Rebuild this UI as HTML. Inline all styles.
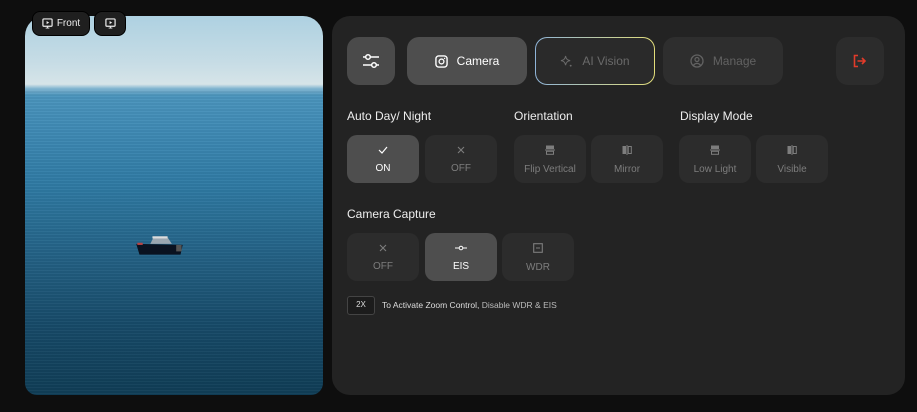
<!DOCTYPE html>
<html><head><meta charset="utf-8"><style>
*{margin:0;padding:0;box-sizing:border-box}
body{width:917px;height:412px;background:#0e0e0e;font-family:"Liberation Sans",sans-serif;position:relative;overflow:hidden;color:#fff}
.photo{position:absolute;left:25px;top:16px;width:298px;height:379px;border-radius:20px 20px 12px 12px;overflow:hidden;
background:linear-gradient(180deg,#aed1e1 0%,#c6dce5 12%,#d6e4e8 18%,#7fb3cf 19.2%,#4b95bd 21%,#3f8ab5 30%,#2f7aa3 45%,#225f82 65%,#174a68 82%,#103d56 100%)}
.ripple{position:absolute;left:0;right:0;top:74px;bottom:0;background:repeating-linear-gradient(180deg,rgba(255,255,255,.03) 0 1px,rgba(0,0,0,.04) 1px 3px)}
.badge{position:absolute;top:11px;height:25px;background:#1f1f1f;border:1.5px solid #000;border-radius:8px;color:#eee;font-size:10px;display:flex;align-items:center;justify-content:center;gap:4px}
.panel{position:absolute;left:332px;top:16px;width:573px;height:379px;background:#232323;border-radius:18px}
.b{position:absolute;border-radius:12px;display:flex;align-items:center;justify-content:center;font-size:12px;gap:9px}
.t{position:absolute;width:72px;height:48px;border-radius:10px;background:#2c2c2c;color:#7d7d7d;font-size:10px;display:flex;flex-direction:column;align-items:center;justify-content:center;gap:9px;padding-top:2px}
.t.on{background:#4e4e4e;color:#fff}
.lbl{position:absolute;font-size:12px;color:#eee}
</style></head><body>
<div class="photo"><div class="ripple"></div>
<svg style="position:absolute;left:108px;top:217px" width="54" height="26" viewBox="0 0 50 24">
<path d="M3 10 L46 11 L44 20 L6 20 Z" fill="#0a1220"/>
<path d="M16 10 L19 4 L32 4 L36 10 Z" fill="#9aa6b0"/>
<rect x="18" y="3" width="14" height="2" fill="#ddd"/>
<rect x="4" y="9" width="5" height="2" fill="#b44"/>
<rect x="40" y="11" width="5" height="6" fill="#555"/>
</svg></div>
<div class="badge" style="left:32px;width:58px"><svg width="11" height="11" viewBox="0 0 12 12"><rect x="1" y="1" width="10" height="8" rx="1" fill="none" stroke="#eee" stroke-width="1.3"/><path d="M5 3.3v3.4L7.8 5z" fill="#eee"/><path d="M6 9v2M4 11h4" stroke="#eee"/></svg>Front</div>
<div class="badge" style="left:94px;width:32px"><svg width="11" height="11" viewBox="0 0 12 12"><rect x="1" y="1" width="10" height="8" rx="1" fill="none" stroke="#eee" stroke-width="1.3"/><path d="M5 3.3v3.4L7.8 5z" fill="#eee"/><path d="M6 9v2M4 11h4" stroke="#eee"/></svg></div>
<div class="panel"></div>
<div class="b" style="left:347px;top:37px;width:48px;height:48px;background:#4a4a4a"><svg width="18" height="16" viewBox="0 0 18 16"><path d="M1 4h16M1 12h16" stroke="#fff" stroke-width="1.6"/><circle cx="6" cy="4" r="2.3" fill="#4a4a4a" stroke="#fff" stroke-width="1.5"/><circle cx="12" cy="12" r="2.3" fill="#4a4a4a" stroke="#fff" stroke-width="1.5"/></svg></div>
<div class="b" style="left:407px;top:37px;width:120px;height:48px;background:#4e4e4e;color:#fff"><svg width="13" height="13" viewBox="0 0 14 14"><rect x="1" y="1" width="12" height="12" rx="3" fill="none" stroke="#fff" stroke-width="1.5"/><circle cx="7" cy="7" r="2.6" fill="none" stroke="#fff" stroke-width="1.4"/><circle cx="10.3" cy="3.7" r=".8" fill="#fff"/></svg>Camera</div>
<div class="b" style="left:535px;top:37px;width:120px;height:48px;border:1.5px solid transparent;background:linear-gradient(#2a2a2a,#2a2a2a) padding-box,linear-gradient(90deg,#8fb4d8,#e2dd7a) border-box;color:#6a6a6a"><svg width="13" height="13" viewBox="0 0 14 14"><path d="M6 1 Q6.5 5.5 11 6 Q6.5 6.5 6 11 Q5.5 6.5 1 6 Q5.5 5.5 6 1z" fill="none" stroke="#6a6a6a" stroke-width="1.1"/><circle cx="11.5" cy="11.5" r="1" fill="#6a6a6a"/></svg>AI Vision</div>
<div class="b" style="left:663px;top:37px;width:120px;height:48px;background:#2e2e2e;color:#626262"><svg width="14" height="14" viewBox="0 0 14 14"><circle cx="7" cy="7" r="6" fill="none" stroke="#626262" stroke-width="1.3"/><circle cx="7" cy="5.5" r="2" fill="none" stroke="#626262" stroke-width="1.2"/><path d="M3.3 11.3Q7 7.5 10.7 11.3" fill="none" stroke="#626262" stroke-width="1.2"/></svg>Manage</div>
<div class="b" style="left:836px;top:37px;width:48px;height:48px;background:#2c2c2c"><svg width="14" height="14" viewBox="0 0 14 14"><path d="M5 1.5H1.5v11H5" fill="none" stroke="#e23b2a" stroke-width="1.6"/><path d="M4.5 7H12M9 4l3 3-3 3" fill="none" stroke="#e23b2a" stroke-width="1.6"/></svg></div>
<div class="lbl" style="left:347px;top:109px">Auto Day/ Night</div>
<div class="lbl" style="left:514px;top:109px">Orientation</div>
<div class="lbl" style="left:680px;top:109px">Display Mode</div>
<div class="t on" style="left:347px;top:135px"><svg width="10" height="8" viewBox="0 0 10 8"><path d="M1 4l3 3 5-6" fill="none" stroke="#fff" stroke-width="1.2"/></svg>ON</div>
<div class="t" style="left:425px;top:135px"><svg width="8" height="8" viewBox="0 0 8 8"><path d="M1 1l6 6M7 1L1 7" stroke="#7d7d7d" stroke-width="1.1"/></svg>OFF</div>
<div class="t" style="left:514px;top:135px"><svg width="10" height="10" viewBox="0 0 10 10"><rect x="1" y="0.5" width="8" height="3.5" fill="#7d7d7d"/><path d="M0 5h10" stroke="#7d7d7d"/><rect x="1.5" y="6.3" width="7" height="3" fill="none" stroke="#7d7d7d"/></svg>Flip Vertical</div>
<div class="t" style="left:591px;top:135px"><svg width="10" height="10" viewBox="0 0 10 10"><rect x="0.5" y="1" width="3.5" height="8" fill="#7d7d7d"/><path d="M5 0v10" stroke="#7d7d7d"/><rect x="6.3" y="1.5" width="3" height="7" fill="none" stroke="#7d7d7d"/></svg>Mirror</div>
<div class="t" style="left:679px;top:135px"><svg width="10" height="10" viewBox="0 0 10 10"><rect x="1" y="0.5" width="8" height="3.5" fill="#7d7d7d"/><path d="M0 5h10" stroke="#7d7d7d"/><rect x="1.5" y="6.3" width="7" height="3" fill="none" stroke="#7d7d7d"/></svg>Low Light</div>
<div class="t" style="left:756px;top:135px"><svg width="10" height="10" viewBox="0 0 10 10"><rect x="0.5" y="1" width="3.5" height="8" fill="#7d7d7d"/><path d="M5 0v10" stroke="#7d7d7d"/><rect x="6.3" y="1.5" width="3" height="7" fill="none" stroke="#7d7d7d"/></svg>Visible</div>
<div class="lbl" style="left:347px;top:207px">Camera Capture</div>
<div class="t" style="left:347px;top:233px"><svg width="8" height="8" viewBox="0 0 8 8"><path d="M1 1l6 6M7 1L1 7" stroke="#7d7d7d" stroke-width="1.1"/></svg>OFF</div>
<div class="t on" style="left:425px;top:233px"><svg width="12" height="8" viewBox="0 0 12 8"><path d="M0 4h4M8 4h4" stroke="#fff"/><circle cx="6" cy="4" r="1.8" fill="none" stroke="#fff"/></svg>EIS</div>
<div class="t" style="left:502px;top:233px"><svg width="10" height="10" viewBox="0 0 10 10"><rect x="0.7" y="0.7" width="8.6" height="8.6" fill="none" stroke="#7d7d7d" stroke-width="1.1"/><path d="M3 5h4" stroke="#7d7d7d"/></svg>WDR</div>
<div style="position:absolute;left:347px;top:296px;width:28px;height:19px;border:1px solid #444;border-radius:3px;background:#1c1c1c;font-size:8px;color:#ddd;text-align:center;line-height:16px">2X</div>
<div style="position:absolute;left:382px;top:300px;font-size:8.5px;color:#ddd">To Activate Zoom Control, <span style="color:#bbb">Disable WDR &amp; EIS</span></div>
</body></html>
